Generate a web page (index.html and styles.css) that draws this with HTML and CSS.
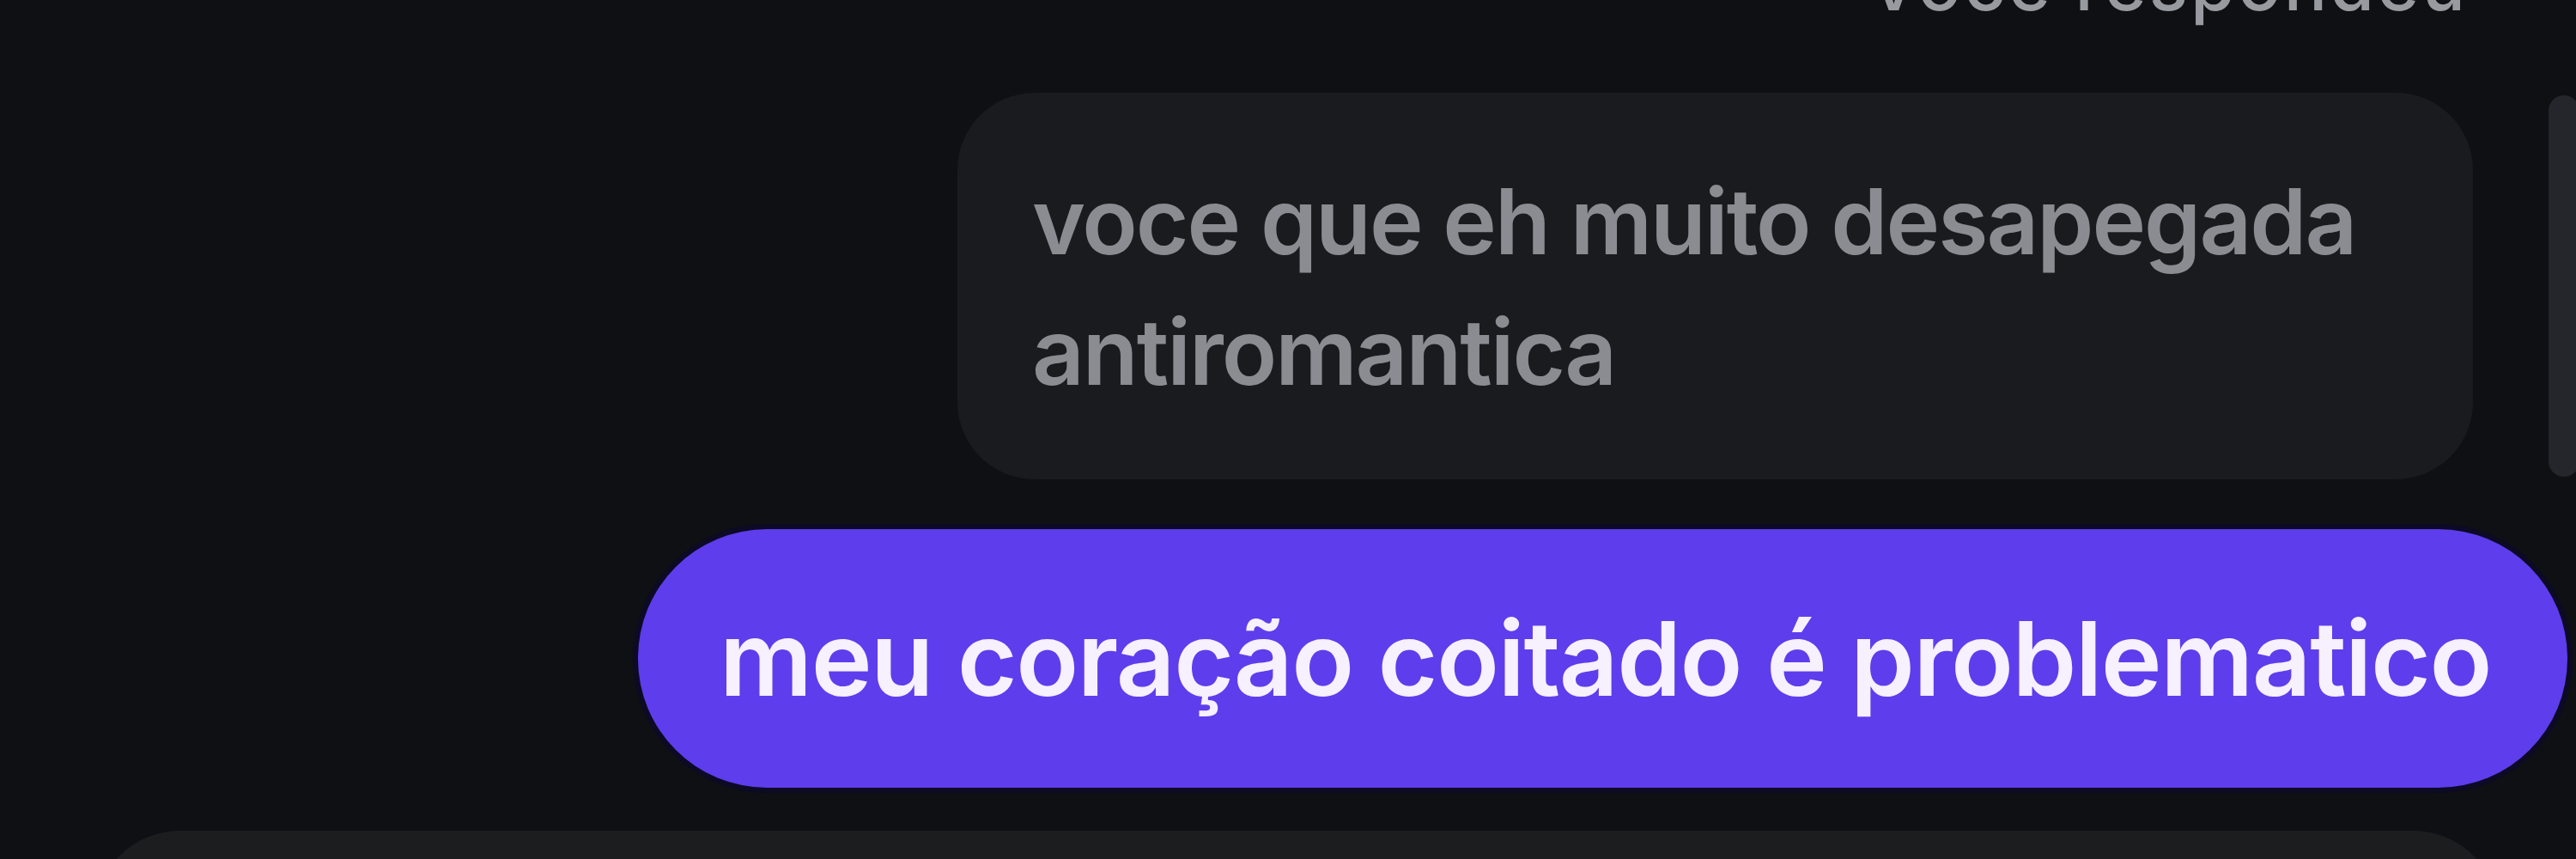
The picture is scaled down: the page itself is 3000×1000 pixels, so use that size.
FILE: index.html
```html
<!DOCTYPE html>
<html lang="pt-BR">
<head>
    <meta charset="UTF-8">
    <meta name="viewport" content="width=device-width, initial-scale=1.0">
    <title>Conversa</title>
    <link rel="stylesheet" href="styles.css">
</head>
<body>

<div class="chat">
    <div class="thread">
        <div class="reply-label">Você respondeu</div>
        <div class="quoted">voce que eh muito desapegada antiromantica</div>
        <div class="sent">meu coração coitado é problematico</div>
    </div>

    <!-- scroll thumb sits over the right edge of the thread -->
    <div class="scroll-thumb"></div>

    <div class="composer"></div>
</div>

</body>
</html>
```

FILE: styles.css
```css
body {
    font-family: Inter, "Noto Sans", "Liberation Sans", sans-serif;
    background-color: #0e1014;
    color: #8a8c91;
    margin: 0;
    overflow: hidden;
}
.chat {
    position: relative;
    height: 1000px;
}
.thread {
    display: flex;
    flex-direction: column;
    align-items: flex-end;
}
.reply-label {
    font-size: 84px;
    font-weight: 500;
    line-height: 1;
    color: #979a9f;
    margin-top: -60px;
    margin-right: 126px;
    letter-spacing: 3px;
}
.quoted {
    box-sizing: border-box;
    width: 1765px;
    margin-top: 84px;
    margin-right: 120px;
    padding: 74px 80px 72px 87px;
    background-color: #191b1f;
    border-radius: 90px;
    font-size: 106px;
    font-weight: 600;
    letter-spacing: -2px;
    line-height: 152px;
    color: #8a8c91;
}
.sent {
    box-sizing: border-box;
    height: 301px;
    margin-top: 58px;
    margin-right: 10px;
    padding: 0 89px 0 95px;
    background-color: #5e3ded;
    border-radius: 150px;
    box-shadow: 0 0 0 6px #0c0a24;
    font-size: 120px;
    font-weight: 600;
    letter-spacing: -1.5px;
    line-height: 301px;
    color: #f6f0ff;
    white-space: nowrap;
}
.scroll-thumb {
    position: absolute;
    top: 111px;
    right: -4px;
    width: 36px;
    height: 444px;
    background-color: #24262c;
    border-radius: 18px;
}
.composer {
    margin: 50px 90px 0 110px;
    height: 200px;
    background-color: #1c1d1f;
    border-radius: 100px 100px 0 0;
}
```
